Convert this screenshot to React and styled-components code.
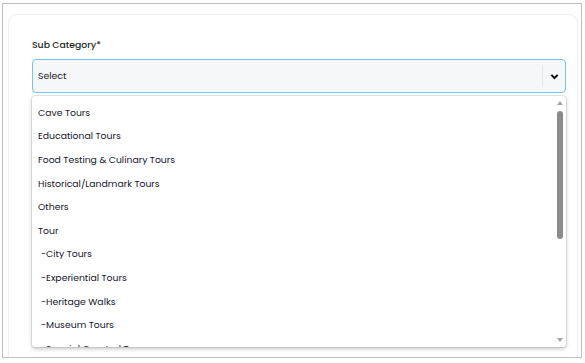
import React from "react";
import styled, { createGlobalStyle } from "styled-components";

const Global = createGlobalStyle`
  html, body { margin: 0; padding: 0; background: #ffffff; }
  body { font-family: Poppins, Inter, "Noto Sans", sans-serif; }
  * { box-sizing: border-box; }
`;

const Frame = styled.div`
  margin: 3px 0 0 2px;
  width: 580px;
  height: 355px;
  border: 1.5px solid #bfbfbf;
  overflow: hidden;
  padding: 10px 3px 0 5px;
`;

const Card = styled.div`
  border: 1px solid #eceef3;
  border-radius: 9px;
  height: 400px;
  padding: 22px 11px 0 23px;
`;

const Label = styled.div`
  font-size: 9.3px;
  font-weight: 500;
  color: #1e1f22;
  line-height: 16px;
  margin-bottom: 6px;
`;

const Field = styled.div`
  position: relative;
`;

const SelectBox = styled.div`
  height: 34px;
  border: 1px solid #74c3f7;
  border-radius: 4px;
  background: #f6f7f9;
  display: flex;
  align-items: center;
  padding-left: 5px;
`;

const SelectText = styled.span`
  flex: 1;
  font-size: 9.3px;
  color: #222226;
`;

const Indicator = styled.div`
  width: 23px;
  height: 22px;
  border-left: 1px solid #e6e7ea;
  display: flex;
  align-items: center;
  justify-content: center;
  padding-left: 1px;
`;

const Menu = styled.div`
  position: absolute;
  top: 37px;
  left: 0;
  right: 0;
  height: 251px;
  background: #ffffff;
  border-radius: 3px;
  box-shadow: 0 0 0 1px rgba(0, 0, 0, 0.08), 0 2px 4px rgba(0, 0, 0, 0.22);
  display: flex;
  overflow: hidden;
`;

const List = styled.div`
  flex: 1;
  padding-top: 5px;
  padding-left: 6px;
`;

const Item = styled.div`
  height: 23.6px;
  display: flex;
  align-items: center;
  font-size: 9.3px;
  color: #15152b;
  white-space: pre;
  padding-left: ${(p) => (p.$sub ? "3px" : "0")};
`;

const Scrollbar = styled.div`
  width: 12px;
  display: flex;
  flex-direction: column;
  align-items: center;
  padding: 3px 0 3px;
`;

const Arrow = styled.div`
  width: 0;
  height: 0;
  border-left: 3px solid transparent;
  border-right: 3px solid transparent;
  ${(p) => (p.$down ? "border-top: 4px solid #a3a3a3;" : "border-bottom: 4px solid #a3a3a3;")}
  margin: 2px 0;
`;

const Track = styled.div`
  flex: 1;
  width: 6px;
  padding-top: 4px;
`;

const Thumb = styled.div`
  width: 6px;
  height: 128px;
  background: #8b8b8b;
  border-radius: 3px;
`;

const items = [
  { t: "Cave Tours" },
  { t: "Educational Tours" },
  { t: "Food Testing & Culinary Tours" },
  { t: "Historical/Landmark Tours" },
  { t: "Others" },
  { t: "Tour" },
  { t: "-City Tours", sub: true },
  { t: "-Experiential Tours", sub: true },
  { t: "-Heritage Walks", sub: true },
  { t: "-Museum Tours", sub: true },
  { t: "-Special Curated Tours", sub: true },
];

export default function App() {
  return (
    <>
      <Global />
      <Frame>
        <Card>
          <Label>Sub Category*</Label>
          <Field>
            <SelectBox>
              <SelectText>Select</SelectText>
              <Indicator>
                <svg width="9" height="9" viewBox="0 0 10 10">
                  <path d="M1.5 3.2 L5 6.7 L8.5 3.2" fill="none" stroke="#111" strokeWidth="2.2" />
                </svg>
              </Indicator>
            </SelectBox>
            <Menu>
              <List>
                {items.map((it) => (
                  <Item key={it.t} $sub={it.sub}>
                    {it.t}
                  </Item>
                ))}
              </List>
              <Scrollbar>
                <Arrow />
                <Track>
                  <Thumb />
                </Track>
                <Arrow $down />
              </Scrollbar>
            </Menu>
          </Field>
        </Card>
      </Frame>
    </>
  );
}
